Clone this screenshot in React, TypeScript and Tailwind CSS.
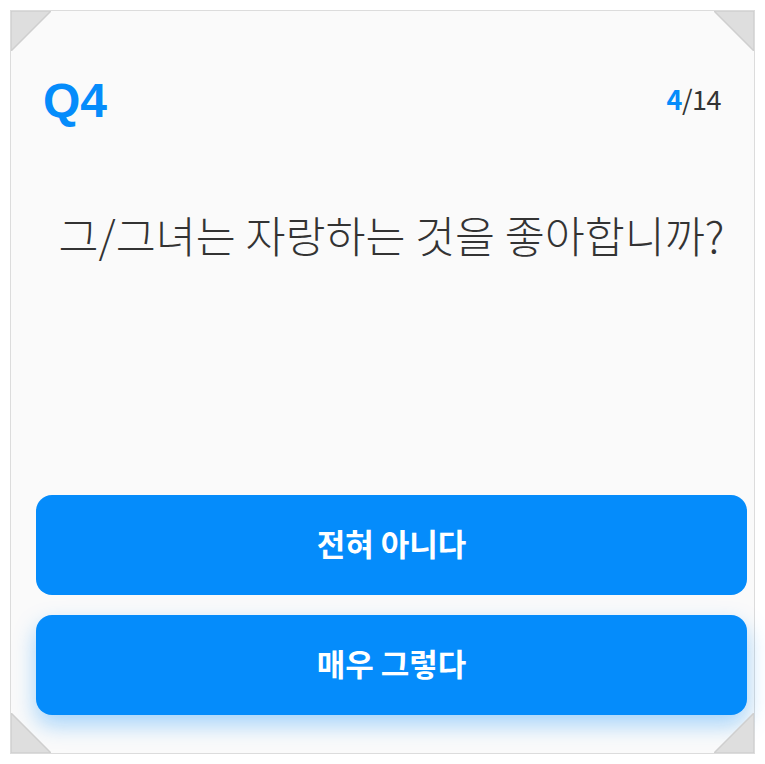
import React from "react";

function Corner({ pos }: { pos: "tl" | "tr" | "bl" | "br" }) {
  const cls =
    pos === "tl"
      ? "top-0 left-0"
      : pos === "tr"
      ? "top-0 right-0"
      : pos === "bl"
      ? "bottom-0 left-0"
      : "bottom-0 right-0";
  const pts =
    pos === "tl"
      ? "0,0 40,0 0,40"
      : pos === "tr"
      ? "0,0 40,0 40,40"
      : pos === "bl"
      ? "0,0 0,40 40,40"
      : "40,0 40,40 0,40";
  return (
    <svg
      className={`absolute ${cls}`}
      width="40"
      height="40"
      viewBox="0 0 40 40"
    >
      <polygon points={pts} fill="#dedede" stroke="#cfcfcf" strokeWidth="1.5" />
    </svg>
  );
}

export default function App() {
  const font = { fontFamily: '"Noto Sans CJK KR", "Noto Sans", sans-serif' };
  return (
    <div className="w-[765px] h-[764px] bg-white p-[10px]" style={font}>
      <div className="relative w-[745px] h-[744px] border border-[#dcdcdc] bg-[#fafafa] flex flex-col">
        <Corner pos="tl" />
        <Corner pos="tr" />
        <Corner pos="bl" />
        <Corner pos="br" />
        <div className="flex items-center justify-between pl-[32px] pr-[33px] pt-[62px]">
          <div
            className="text-[48px] leading-[56px] font-bold text-[#058cfb]"
            style={{ fontFamily: '"Liberation Sans", Arial, sans-serif' }}
          >
            Q4
          </div>
          <div className="text-[27px] leading-[32px] text-[#333] tracking-[-0.5px] pb-[4px]">
            <span className="text-[#058cfb] font-bold">4</span>/14
          </div>
        </div>
        <div className="pl-[25px] pr-[7px] mt-[80px] text-center text-[43.5px] leading-[52px] font-light text-[#333]">
          그/그녀는 자랑하는 것을 좋아합니까?
        </div>
        <div className="flex-1" />
        <div className="flex flex-col gap-[20px] pl-[25px] pr-[7px] pb-[38px]">
          <button className="h-[100px] w-full rounded-[16px] bg-[#058cfb] text-white text-[31px] font-bold">
            <span className="relative -top-[2px]">전혀 아니다</span>
          </button>
          <button className="h-[100px] w-full rounded-[16px] bg-[#058cfb] text-white text-[31px] font-bold shadow-[0_10px_22px_rgba(5,140,251,0.35)]">
            <span className="relative -top-[2px]">매우 그렇다</span>
          </button>
        </div>
      </div>
    </div>
  );
}
